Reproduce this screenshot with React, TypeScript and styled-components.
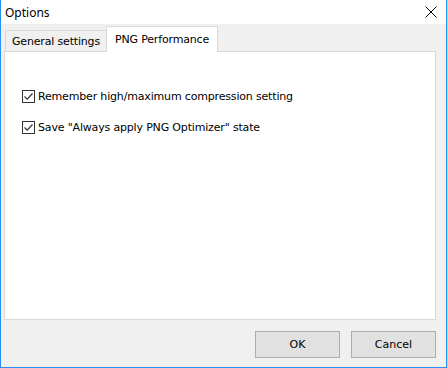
import React from 'react';
import styled, { createGlobalStyle } from 'styled-components';

const GlobalStyle = createGlobalStyle`
  html, body {
    margin: 0;
    padding: 0;
    background: #ffffff;
  }
  * {
    box-sizing: border-box;
  }
`;

const Window = styled.div`
  width: 447px;
  height: 368px;
  display: flex;
  flex-direction: column;
  background: #f0f0f0;
  border: 1px solid #2b8ef0;
  border-top: none;
  font-family: 'DejaVu Sans', Tahoma, sans-serif;
  font-size: 11px;
  letter-spacing: -0.17px;
  color: #000;
`;

const TitleBar = styled.div`
  height: 26px;
  display: flex;
  align-items: center;
  justify-content: space-between;
  background: #ffffff;
  padding: 0 8px 0 4px;
  font-family: 'Noto Sans', 'Segoe UI', sans-serif;
  font-size: 12px;
  letter-spacing: 0;
`;

const CloseButton = styled.div`
  width: 14px;
  height: 14px;
  display: flex;
  align-items: center;
  justify-content: center;
`;

const Body = styled.div`
  flex: 1;
  display: flex;
  flex-direction: column;
  padding: 2px 10px 9px 2px;
`;

const TabStrip = styled.div`
  display: flex;
  align-items: flex-end;
  height: 26px;
  padding-left: 2px;
  position: relative;
  z-index: 1;
`;

const Tab = styled.div<{ $active?: boolean }>`
  height: ${(p) => (p.$active ? '26px' : '22px')};
  padding: 0 ${(p) => (p.$active ? '8px' : '6px')};
  display: flex;
  align-items: center;
  background: ${(p) => (p.$active ? '#ffffff' : '#f0f0f0')};
  border: 1px solid #d9d9d9;
  border-bottom: ${(p) => (p.$active ? 'none' : '1px solid #d9d9d9')};
  margin-left: ${(p) => (p.$active ? '-1px' : '0')};
  white-space: nowrap;
`;

const Panel = styled.div`
  height: 269px;
  margin-top: -1px;
  margin-left: 1px;
  background: #ffffff;
  border: 1px solid #d9d9d9;
  display: flex;
  flex-direction: column;
  gap: 17px;
  padding: 37px 0 0 17px;
`;

const CheckRow = styled.label`
  display: flex;
  align-items: center;
  gap: 3px;
  height: 14px;
`;

const Box = styled.span`
  width: 13px;
  height: 13px;
  border: 1px solid #333333;
  background: #ffffff;
  display: flex;
  align-items: center;
  justify-content: center;
`;

const Footer = styled.div`
  display: flex;
  justify-content: flex-end;
  gap: 11px;
  margin-top: 11px;
`;

const Button = styled.div`
  width: 85px;
  height: 27px;
  display: flex;
  align-items: center;
  justify-content: center;
  background: #e1e1e1;
  border: 1px solid #adadad;
  letter-spacing: 0;
`;

const Check = () => (
  <Box>
    <svg width="11" height="11" viewBox="0 0 11 11">
      <path d="M1.5 5.5 L4.2 8.2 L9.5 2.5" fill="none" stroke="#333" strokeWidth="1.2" />
    </svg>
  </Box>
);

export default function App() {
  return (
    <>
      <GlobalStyle />
      <Window>
        <TitleBar>
          <span>Options</span>
          <CloseButton>
            <svg width="12" height="12" viewBox="0 0 12 12">
              <path d="M0.5 0.5 L11.5 11.5 M11.5 0.5 L0.5 11.5" stroke="#000" strokeWidth="1" />
            </svg>
          </CloseButton>
        </TitleBar>
        <Body>
          <TabStrip>
            <Tab>General settings</Tab>
            <Tab $active>PNG Performance</Tab>
          </TabStrip>
          <Panel>
            <CheckRow>
              <Check />
              Remember high/maximum compression setting
            </CheckRow>
            <CheckRow>
              <Check />
              Save "Always apply PNG Optimizer" state
            </CheckRow>
          </Panel>
          <Footer>
            <Button>OK</Button>
            <Button>Cancel</Button>
          </Footer>
        </Body>
      </Window>
    </>
  );
}
